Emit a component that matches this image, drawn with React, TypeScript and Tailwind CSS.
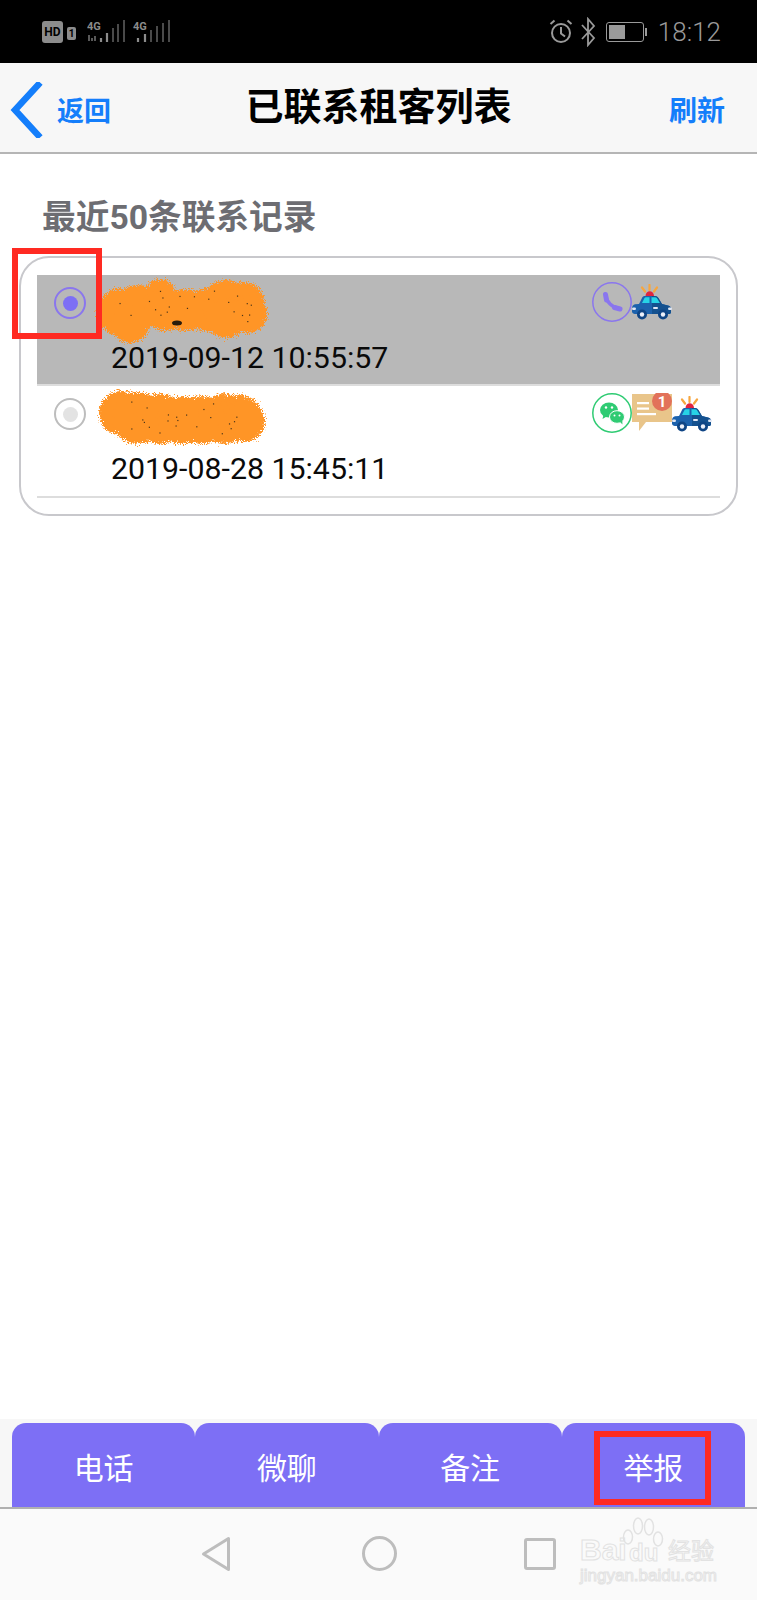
const blobOne = [
  [19, 36, 24], [36, 32, 23], [58, 18, 15], [64, 34, 21], [84, 34, 21], [104, 34, 21], [124, 28, 24], [142, 26, 20], [146, 38, 19], [28, 48, 19], [124, 42, 20],
];
const blobTwo = [
  [19, 26, 22], [36, 31, 26], [58, 32, 25], [80, 33, 24], [100, 33, 24], [122, 32, 25], [138, 31, 23], [142, 34, 21],
];

function specks(seed: number, count: number, w: number, h: number) {
  const out: number[][] = [];
  let s = seed;
  for (let i = 0; i < count; i++) {
    s = (s * 9301 + 49297) % 233280;
    const x = 14 + (s / 233280) * (w - 28);
    s = (s * 9301 + 49297) % 233280;
    const y = 14 + (s / 233280) * (h - 28);
    out.push([x, y]);
  }
  return out;
}

function Scribble({ id, circles, seed, width, smudge }: { id: string; circles: number[][]; seed: number; width: number; smudge?: boolean }) {
  return (
    <svg width={width} height={62} viewBox={`0 0 ${width} 62`} className="overflow-visible shrink-0">
      <defs>
        <filter id={id} x="-10%" y="-20%" width="120%" height="140%">
          <feTurbulence type="fractalNoise" baseFrequency="1.1" numOctaves="2" seed={seed} result="n" />
          <feDisplacementMap in="SourceGraphic" in2="n" scale="11" xChannelSelector="R" yChannelSelector="G" />
        </filter>
      </defs>
      <g filter={`url(#${id})`}>
        {circles.map((c, i) => (
          <circle key={i} cx={c[0]} cy={c[1]} r={c[2]} fill="#ff9526" />
        ))}
      </g>
      {specks(seed, 22, width, 62).map((p, i) => (
        <rect key={i} x={p[0]} y={p[1]} width={1.2} height={1.2} fill="#4a3418" />
      ))}
      {smudge && <ellipse cx="75" cy="47" rx="5" ry="2.500" fill="#2a1c0c" />}
    </svg>
  );
}

function PoliceCar() {
  return (
    <svg width="40" height="36" viewBox="0 0 40 36" className="shrink-0">
      <path d="M10 3.500l3 4M17.500 1v5M25 3.500l-3 4" stroke="#f7a63f" strokeWidth="2.200" strokeLinecap="round" />
      <path d="M13.500 12c0-6.500 8.500-6.500 8.500 0z" fill="#e0243f" />
      <path d="M7 20l3-6c.6-1.400 1.600-2 3-2h10c1.400 0 2.600.7 3.400 2l3.600 6 6 1.400c2 .5 3 1.600 3 3.600v3c0 1.400-1 2-2 2H3c-1.600 0-3-1-3-2.500v-3.500c0-2 1.500-3.600 3-3.800z" fill="#1c62ad" />
      <path d="M20 12h3c1.400 0 2.600.7 3.400 2l3.600 6 6 1.400c2 .5 3 1.600 3 3.600v3c0 1.400-1 2-2 2H20z" fill="#14518f" />
      <path d="M10 19l2.500-5c.3-.6.7-.8 1.300-.8h3.700V19z" fill="#27d3e6" />
      <path d="M19.500 13.200h3.700c.7 0 1.300.3 1.700.9l3 4.900h-8.400z" fill="#27d3e6" />
      <rect x="0" y="23.500" width="4" height="2.400" rx="1.200" fill="#dfe6f5" />
      <rect x="36" y="23.500" width="4" height="2.400" rx="1.200" fill="#dfe6f5" />
      <rect x="21" y="23" width="5" height="2" rx="1" fill="#dfe6f5" />
      <circle cx="10" cy="30.500" r="5" fill="#0f4585" />
      <circle cx="10" cy="30.500" r="2.200" fill="#ecf0fa" />
      <circle cx="31" cy="30.500" r="5" fill="#0f4585" />
      <circle cx="31" cy="30.500" r="2.200" fill="#ecf0fa" />
    </svg>
  );
}

function PhoneRing() {
  return (
    <svg width="40" height="40" viewBox="0 0 40 40" className="shrink-0">
      <circle cx="20" cy="20" r="19.200" fill="none" stroke="#8a76ee" strokeWidth="1.500" />
      <path d="M13.800 13.500C14.500 20 20 25.500 27 26.500" fill="none" stroke="#8a76ee" strokeWidth="3.400" strokeLinecap="round" />
      <path d="M13.500 12.500L14.500 18M22.500 25.500L28 27" fill="none" stroke="#8a76ee" strokeWidth="5" strokeLinecap="round" />
    </svg>
  );
}

function WechatRing() {
  return (
    <svg width="40" height="40" viewBox="0 0 40 40" className="shrink-0">
      <circle cx="20" cy="20" r="19.200" fill="none" stroke="#2fcb73" strokeWidth="1.500" />
      <ellipse cx="17" cy="17" rx="9" ry="7.500" fill="#2fcb73" />
      <path d="M11.500 21.500l-1 4.500 5-3z" fill="#2fcb73" />
      <ellipse cx="25" cy="24" rx="7.500" ry="6.300" fill="#2fcb73" stroke="#fff" strokeWidth="1" />
      <path d="M28 29l2.500 2.500-.3-4z" fill="#2fcb73" />
      <circle cx="14" cy="14.500" r="1.200" fill="#fff" />
      <circle cx="20" cy="14.500" r="1.200" fill="#fff" />
      <circle cx="22.500" cy="22.500" r="1" fill="#fff" />
      <circle cx="27.500" cy="22.500" r="1" fill="#fff" />
    </svg>
  );
}

function ChatBadge() {
  return (
    <svg width="40" height="40" viewBox="0 0 40 40" className="shrink-0">
      <path d="M0 1h40v28H14l-7 9v-9H0z" fill="#e9c58a" />
      <rect x="5" y="9" width="12" height="2.200" fill="#fff" />
      <rect x="5" y="14.500" width="12" height="2.200" fill="#fff" />
      <rect x="5" y="20" width="19" height="2.200" fill="#fff" />
      <circle cx="30" cy="8" r="10" fill="#e2725a" />
      <text x="30" y="13.500" textAnchor="middle" fontSize="15" fontWeight="700" fill="#fff" fontFamily="Roboto, sans-serif">1</text>
    </svg>
  );
}

function Radio({ active }: { active: boolean }) {
  return (
    <div
      className={`mt-[12px] ml-[17px] w-[32px] h-[32px] rounded-full border-2 flex items-center justify-center shrink-0 ${
        active ? "border-[#8a76ee]" : "border-[#bdbdbd] bg-white"
      }`}
    >
      <div className={`w-[15px] h-[15px] rounded-full ${active ? "bg-[#7d6ff5]" : "bg-[#e3e3e3]"}`} />
    </div>
  );
}

const tabs = ["电话", "微聊", "备注", "举报"];

export default function App() {
  return (
    <div className="relative w-[757px] h-[1600px] flex flex-col bg-white overflow-hidden font-['Roboto','Noto_Sans_CJK_SC',sans-serif]">
      {/* status bar */}
      <div className="h-[63px] bg-black flex items-center justify-between pl-[42px] pr-[36px] shrink-0">
        <div className="flex items-center">
          <div className="w-[21px] h-[22px] bg-[#8c8c8c] rounded-[3px] text-black text-[12px] font-bold leading-[22px] text-center">HD</div>
          <div className="ml-[4px] mt-[3px] w-[9px] h-[13px] bg-[#8c8c8c] rounded-[2px] text-black text-[10px] font-bold leading-[13px] text-center">1</div>
          <svg width="84" height="26" viewBox="0 0 84 26" className="ml-[11px]">
            <text x="0" y="11" fontSize="11" fontWeight="700" fill="#8c8c8c" fontFamily="Roboto, sans-serif">4G</text>
            <path d="M2 16v6M5 19v3M8 17v5" stroke="#777" strokeWidth="1.500" />
            <path d="M14 19v4M20 14v9" stroke="#8c8c8c" strokeWidth="2.200" />
            <path d="M26 9v14M31 5v18M37 1v22" stroke="#4a4a4a" strokeWidth="2" />
            <text x="46" y="11" fontSize="11" fontWeight="700" fill="#8c8c8c" fontFamily="Roboto, sans-serif">4G</text>
            <path d="M51 19v4M58 15v8" stroke="#8c8c8c" strokeWidth="2.200" />
            <path d="M64 11v12M70 7v16M76 4v19M82 1v22" stroke="#4a4a4a" strokeWidth="2" />
          </svg>
        </div>
        <div className="flex items-center text-[#9a9a9a]">
          <svg width="24" height="28" viewBox="0 0 24 28">
            <circle cx="12" cy="15" r="9" fill="none" stroke="#9a9a9a" strokeWidth="2" />
            <path d="M12 9v6.500l4 3M1.500 6l4-3.500M22.500 6l-4-3.500" fill="none" stroke="#9a9a9a" strokeWidth="2" />
          </svg>
          <svg width="16" height="30" viewBox="0 0 16 30" className="ml-[7px]">
            <path d="M2 8l12 13-6 7V2l6 7L2 22" fill="none" stroke="#9a9a9a" strokeWidth="1.800" />
          </svg>
          <div className="ml-[10px] flex items-center">
            <div className="w-[38px] h-[20px] border border-[#9a9a9a] rounded-[3px] p-[2px]">
              <div className="w-[16px] h-full bg-[#9a9a9a]" />
            </div>
            <div className="ml-[1px] w-[2px] h-[8px] bg-[#9a9a9a]" />
          </div>
          <span className="ml-[11px] text-[26px] leading-none font-light">18:12</span>
        </div>
      </div>

      {/* nav */}
      <header className="h-[91px] shrink-0 bg-[#f7f7f7] border-b-2 border-[#b5b5b5] grid grid-cols-[1fr_auto_1fr] items-center">
        <div className="flex items-center pl-[8px] text-[#147efb]">
          <svg width="35" height="56" viewBox="0 0 35 56" className="shrink-0 mt-[4px]">
            <path d="M30 3L7 28l23 25" fill="none" stroke="#147efb" strokeWidth="6.500" strokeLinecap="square" />
          </svg>
          <span className="ml-[14px] mt-[9px] text-[27px] font-bold">返回</span>
        </div>
        <h1 className="text-[38px] font-bold text-black">已联系租客列表</h1>
        <div className="text-right pr-[32px] mt-[9px] text-[28px] font-bold text-[#147efb]">刷新</div>
      </header>

      {/* list */}
      <main className="flex-1 min-h-0">
        <h2 className="mt-[39px] ml-[42px] h-[51px] leading-[50px] text-[33.7px] font-bold text-[#6d6d72]">最近50条联系记录</h2>
        <div className="mt-[12px] mx-[19px] rounded-[30px] border-2 border-[#c8c8cc] px-4 pt-[17px] pb-4">
          <div className="h-[111px] bg-[#b8b8b8] border-b-2 border-[#dddddd] flex">
            <Radio active />
            <div className="ml-[25px] w-[481px]">
              <div className="h-[63px] flex items-center -ml-[9px]">
                <Scribble id="blob-a" circles={blobOne} seed={3} width={168} smudge />
              </div>
              <div className="h-[40px] leading-[40px] text-[30.3px] text-[#0a0a0a]">2019-09-12 10:55:57</div>
            </div>
            <div className="pt-[7px] flex items-start">
              <PhoneRing />
              <div className="mt-[2px]">
                <PoliceCar />
              </div>
            </div>
          </div>
          <div className="h-[112px] border-b-2 border-[#dddddd] flex">
            <Radio active={false} />
            <div className="ml-[25px] w-[481px]">
              <div className="h-[63px] flex items-center -ml-[9px]">
                <Scribble id="blob-b" circles={blobTwo} seed={8} width={160} />
              </div>
              <div className="h-[40px] leading-[40px] text-[30.3px] text-[#0a0a0a]">2019-08-28 15:45:11</div>
            </div>
            <div className="pt-[7px] flex items-start">
              <WechatRing />
              <ChatBadge />
              <div className="mt-[3px]">
                <PoliceCar />
              </div>
            </div>
          </div>
        </div>
      </main>

      {/* bottom actions */}
      <div className="h-[88px] shrink-0 bg-[#f7f7f7] px-3 pt-[4px] flex">
        {tabs.map((t) => (
          <button key={t} className="flex-1 rounded-t-[14px] bg-[#7d6ff5] text-white text-[30px] pt-[6px]">{t}</button>
        ))}
      </div>

      {/* android nav */}
      <div className="h-[93px] shrink-0 bg-[#fafafa] border-t-2 border-[#b0b0b0] flex items-center justify-center pb-[2px]">
        <svg width="30" height="36" viewBox="0 0 30 36">
          <path d="M27.500 2.500v31L2.500 18z" fill="none" stroke="#bdbdbd" strokeWidth="3" strokeLinejoin="round" />
        </svg>
        <div className="ml-[131px] w-[35px] h-[35px] rounded-full border-[3px] border-[#bdbdbd]" />
        <div className="ml-[127px] w-[32px] h-[32px] rounded-[3px] border-[3px] border-[#bdbdbd]" />
      </div>

      {/* watermark */}
      <div className="absolute left-[580px] top-[1518px] w-[140px] h-[66px] text-transparent [-webkit-text-stroke:1px_#e2e2e2] font-['Liberation_Sans',sans-serif]">
        <svg width="44" height="40" viewBox="0 0 44 40" className="absolute left-[40px] -top-[1px]">
          <g fill="none" stroke="#e2e2e2" strokeWidth="1.500">
            <ellipse cx="8" cy="20" rx="4.500" ry="7" />
            <ellipse cx="18" cy="9" rx="4.500" ry="8" />
            <ellipse cx="29" cy="10" rx="4.500" ry="8" />
            <ellipse cx="38" cy="22" rx="4.500" ry="7" />
          </g>
        </svg>
        <span className="absolute left-0 top-[12px] text-[30px] leading-[40px] font-bold">Bai</span>
        <span className="absolute left-[49px] top-[20px] text-[24px] leading-[30px] font-bold">du</span>
        <span className="absolute left-[88px] top-[15px] text-[23px] leading-[32px] font-['Noto_Sans_CJK_SC',sans-serif]">经验</span>
        <span className="absolute left-0 top-[48px] text-[17px] leading-[20px] whitespace-nowrap">jingyan.baidu.com</span>
      </div>

      {/* red annotation boxes */}
      <div className="absolute left-[12px] top-[248px] w-[90px] h-[91px] border-[6px] border-[#ff2a22]" />
      <div className="absolute left-[594px] top-[1431px] w-[117px] h-[74px] border-[6px] border-[#ff2a22]" />
    </div>
  );
}
